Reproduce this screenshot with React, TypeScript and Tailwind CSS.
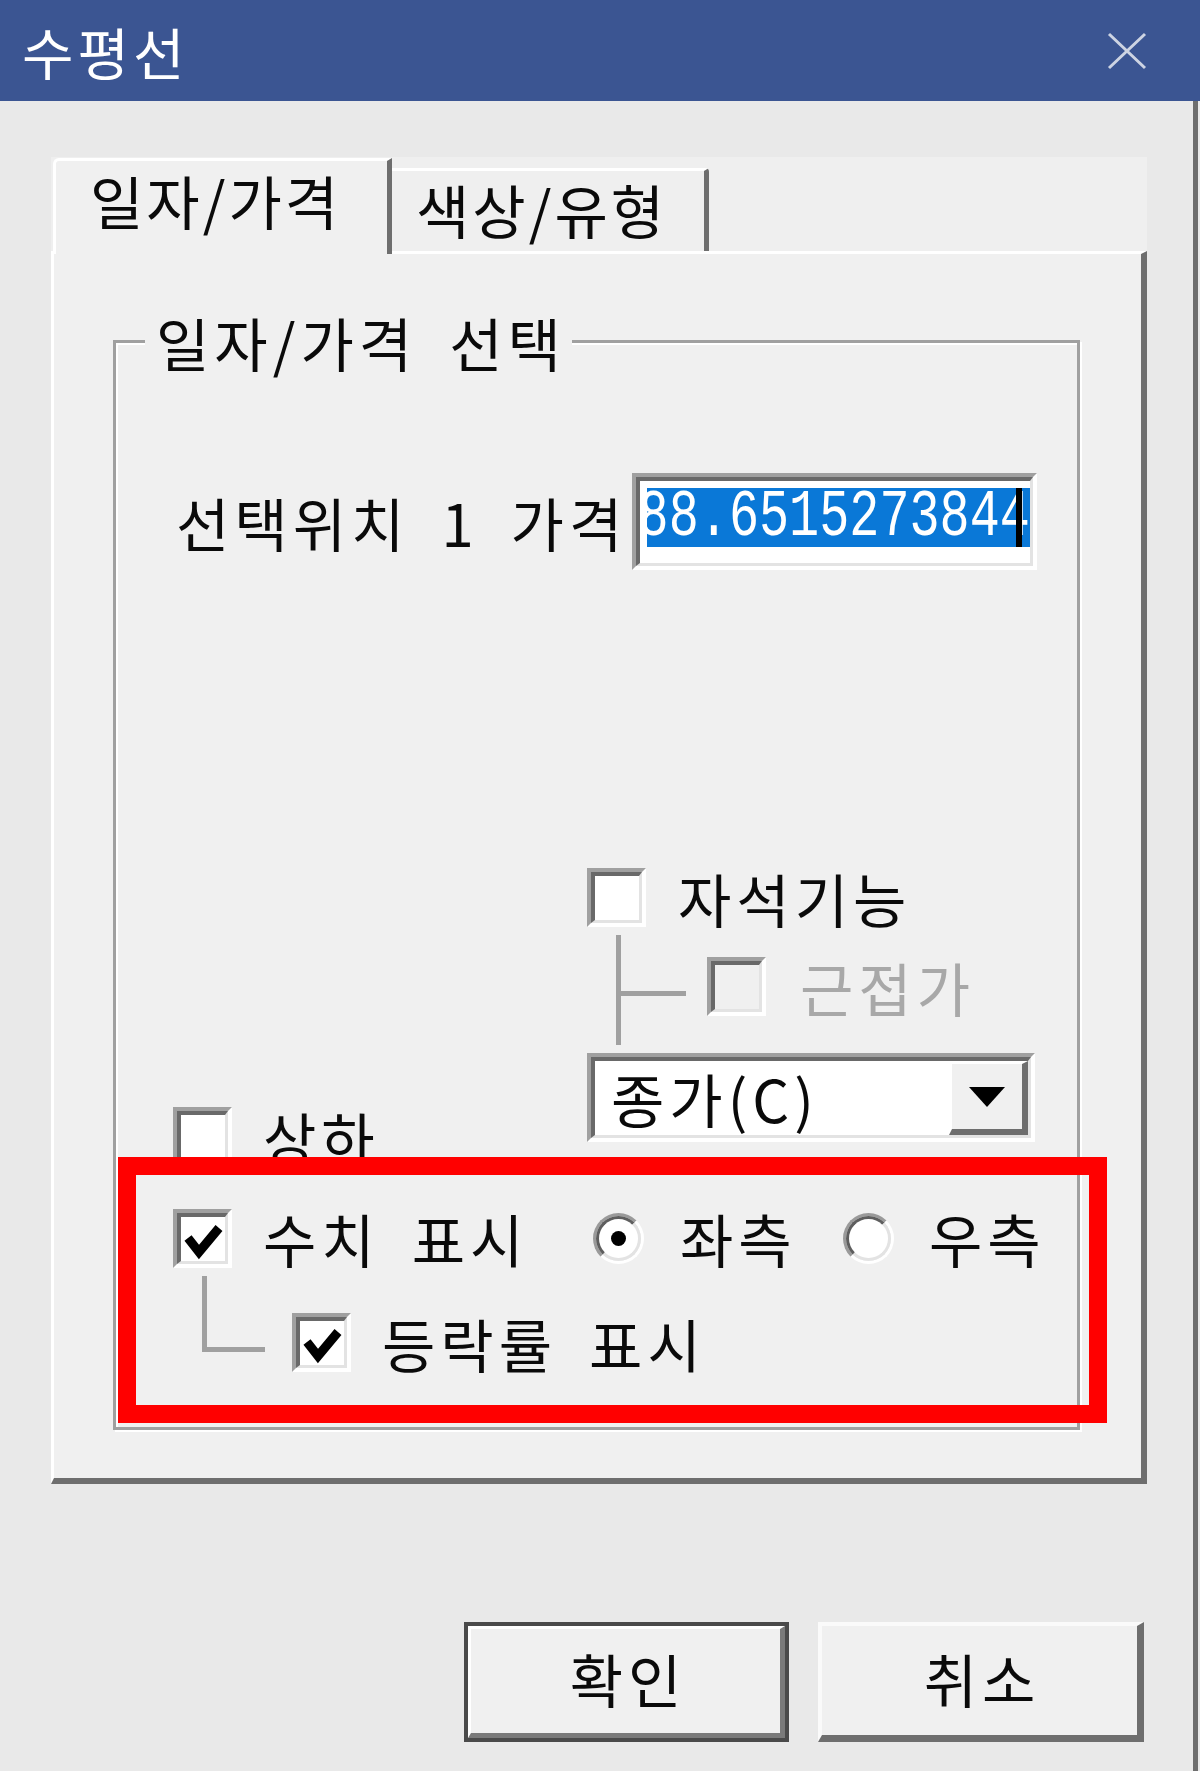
import React from "react";

function Check({ checked = false, disabled = false }: { checked?: boolean; disabled?: boolean }) {
  return (
    <div className="w-[59px] h-[59px] shrink-0 border-t-[4px] border-l-[4px] border-b-[4px] border-r-[4px] border-t-[#a0a0a0] border-l-[#a0a0a0] border-b-white border-r-white">
      <div
        className={`relative w-full h-full border-t-[4px] border-l-[4px] border-b-[3px] border-r-[3px] border-t-[#696969] border-l-[#696969] border-b-[#e3e3e3] border-r-[#e3e3e3] ${
          disabled ? "bg-[#f0f0f0]" : "bg-white"
        }`}
      >
        {checked && (
          <svg width="44" height="44" viewBox="0 0 44 44" className="block">
            <polyline points="7,21 18,35 38,11" fill="none" stroke="#000" strokeWidth="9" strokeLinejoin="miter" />
          </svg>
        )}
      </div>
    </div>
  );
}

function Radio({ checked = false }: { checked?: boolean }) {
  return (
    <div className="w-[51px] h-[51px] shrink-0 rounded-full border-[3px] border-t-[#9a9a9a] border-l-[#9a9a9a] border-b-white border-r-white">
      <div className="w-full h-full rounded-full border-[3px] border-t-[#5e5e5e] border-l-[#5e5e5e] border-b-[#e3e3e3] border-r-[#e3e3e3] bg-white flex items-center justify-center">
        {checked && <div className="w-[15px] h-[15px] rounded-full bg-black" />}
      </div>
    </div>
  );
}

export default function App() {
  return (
    <div className="w-[1200px] h-[1771px] bg-[#e9e9e9] relative overflow-hidden font-['Noto_Sans_CJK_KR',sans-serif] text-[#0a0a0a] tracking-[5px] [word-spacing:14px]">
      {/* title bar */}
      <div className="h-[101px] bg-[#3b5592] flex items-center justify-between pl-[22px] pr-[53px]">
        <span className="text-white text-[56px] leading-none tracking-[4px]">수평선</span>
        <svg width="40" height="38" viewBox="0 0 40 38">
          <path d="M2 2 L38 36 M38 2 L2 36" stroke="#cdd4e3" strokeWidth="3" fill="none" />
        </svg>
      </div>

      <div className="flex h-[1670px]">
        <div className="w-[1193px] pl-[51px] pr-[46px] pt-[56px] flex flex-col">
          {/* tab header */}
          <div className="h-[94px] bg-[#efefef] flex items-start pl-[2px] relative z-10">
            <div className="mt-[1px] h-[96px] w-[339px] bg-[#f0f0f0] border-t-[3px] border-l-[3px] border-r-[5px] border-t-white border-l-white border-r-[#6e6e6e] rounded-tl-[6px] pl-[34px] pt-[10px] text-[58px] leading-none tracking-[3px]">
              일자/가격
            </div>
            <div className="mt-[11px] h-[83px] w-[317px] border-t-[3px] border-r-[5px] border-t-white border-r-[#6e6e6e] rounded-tr-[4px] pl-[24px] pt-[9px] text-[58px] leading-none tracking-[3px]">
              색상/유형
            </div>
          </div>

          {/* panel */}
          <div className="h-[1233px] bg-[#f0f0f0] border-t-[3px] border-l-[3px] border-r-[6px] border-b-[6px] border-t-white border-l-white border-r-[#6e6e6e] border-b-[#6e6e6e] pl-[59px] pt-[86px]">
            <div className="w-[967px] h-[1090px] border-[3px] border-[#a0a0a0] shadow-[inset_2px_2px_0_#ffffff,2px_2px_0_#ffffff] flex flex-col">
              {/* legend */}
              <div className="-mt-[30px] ml-[29px] self-start bg-[#f0f0f0] pl-[11px] pr-[6px] text-[58px] leading-[58px]">
                일자/가격 선택
              </div>

              {/* price row */}
              <div className="mt-[102px] flex items-center h-[97px] pl-[60px]">
                <div className="w-[456px] shrink-0 text-[58px] leading-none">선택위치 1 가격</div>
                <div className="w-[405px] h-[97px] border-t-[4px] border-l-[4px] border-b-[4px] border-r-[4px] border-t-[#a0a0a0] border-l-[#a0a0a0] border-b-white border-r-white">
                  <div className="w-full h-full border-t-[4px] border-l-[4px] border-b-[3px] border-r-[3px] border-t-[#696969] border-l-[#696969] border-b-[#e3e3e3] border-r-[#e3e3e3] bg-white pl-[7px] pt-[7px]">
                    <div className="relative w-[383px] h-[59px] bg-[#0a78d7] overflow-hidden flex items-center justify-end">
                      <span className="font-['Liberation_Mono',monospace] tracking-normal [word-spacing:0px] text-white text-[66px] leading-none whitespace-nowrap scale-x-[0.76] origin-right">
                        88.6515273844
                      </span>
                      <div className="absolute right-[8px] top-0 w-[6px] h-[59px] bg-black" />
                    </div>
                  </div>
                </div>
              </div>

              {/* lower section */}
              <div className="mt-[298px] flex pl-[57px]">
                <div className="w-[414px] shrink-0 pt-[239px]">
                  <div className="flex items-center">
                    <Check />
                    <span className="ml-[31px] text-[58px] leading-none">상하</span>
                  </div>
                </div>
                <div className="flex flex-col">
                  <div className="flex items-center">
                    <Check />
                    <span className="ml-[32px] text-[58px] leading-none">자석기능</span>
                  </div>
                  <div className="flex items-start mt-[8px] h-[110px]">
                    <div className="ml-[29px] w-[5px] h-[110px] bg-[#a0a0a0]" />
                    <div className="mt-[56px] w-[65px] h-[5px] bg-[#a0a0a0]" />
                    <div className="ml-[21px] mt-[22px] flex items-center">
                      <Check disabled />
                      <span className="ml-[34px] text-[58px] leading-none text-[#a8a8a8]">근접가</span>
                    </div>
                  </div>
                  <div className="mt-[8px] w-[448px] h-[89px] border-t-[4px] border-l-[4px] border-b-[4px] border-r-[4px] border-t-[#a0a0a0] border-l-[#a0a0a0] border-b-white border-r-white">
                    <div className="w-full h-full border-t-[4px] border-l-[4px] border-b-[3px] border-r-[3px] border-t-[#696969] border-l-[#696969] border-b-[#e3e3e3] border-r-[#e3e3e3] bg-white flex items-center justify-between">
                      <span className="pl-[16px] text-[58px] leading-none">종가(C)</span>
                      <div className="w-[79px] h-full bg-[#f0f0f0] border-t-[3px] border-l-[3px] border-r-[6px] border-b-[6px] border-t-white border-l-white border-r-[#6e6e6e] border-b-[#6e6e6e] flex items-center justify-center">
                        <svg width="36" height="20" viewBox="0 0 36 20">
                          <polygon points="0,0 36,0 18,20" fill="#000" />
                        </svg>
                      </div>
                    </div>
                  </div>
                </div>
              </div>

              {/* 수치 표시 row */}
              <div className="mt-[42px] flex items-center pl-[57px] h-[60px]">
                <Check checked />
                <span className="ml-[31px] w-[330px] shrink-0 text-[58px] leading-none">수치 표시</span>
                <Radio checked />
                <span className="ml-[36px] w-[163px] shrink-0 text-[58px] leading-none">좌측</span>
                <Radio />
                <span className="ml-[35px] text-[58px] leading-none">우측</span>
              </div>

              {/* 등락률 표시 row */}
              <div className="flex items-start pl-[86px]">
                <div className="mt-[8px] w-[63px] h-[76px] border-l-[5px] border-b-[5px] border-[#a0a0a0]" />
                <div className="ml-[27px] mt-[45px] flex items-center">
                  <Check checked />
                  <span className="ml-[31px] text-[58px] leading-none">등락률 표시</span>
                </div>
              </div>
            </div>
          </div>

          {/* buttons */}
          <div className="mt-[138px] flex pl-[413px] gap-[29px]">
            <div className="w-[325px] h-[120px] border-[4px] border-[#4a4a4a]">
              <div className="h-full bg-[#f0f0f0] border-t-[3px] border-l-[3px] border-r-[5px] border-b-[5px] border-t-white border-l-white border-r-[#7a7a7a] border-b-[#7a7a7a] flex items-center justify-center pb-[6px] pl-[5px] text-[58px] leading-none">
                확인
              </div>
            </div>
            <div className="w-[326px] h-[120px] bg-[#f0f0f0] border-t-[4px] border-l-[4px] border-r-[7px] border-b-[7px] border-t-[#fafafa] border-l-[#fafafa] border-r-[#6e6e6e] border-b-[#6e6e6e] flex items-center justify-center pb-[6px] pl-[5px] text-[58px] leading-none">
              취소
            </div>
          </div>
        </div>
        <div className="w-[5px] bg-[#6e6e6e]" />
      </div>

      {/* red annotation box */}
      <div className="absolute left-[118px] top-[1157px] w-[989px] h-[266px] border-[18px] border-[#ff0000]" />
    </div>
  );
}
